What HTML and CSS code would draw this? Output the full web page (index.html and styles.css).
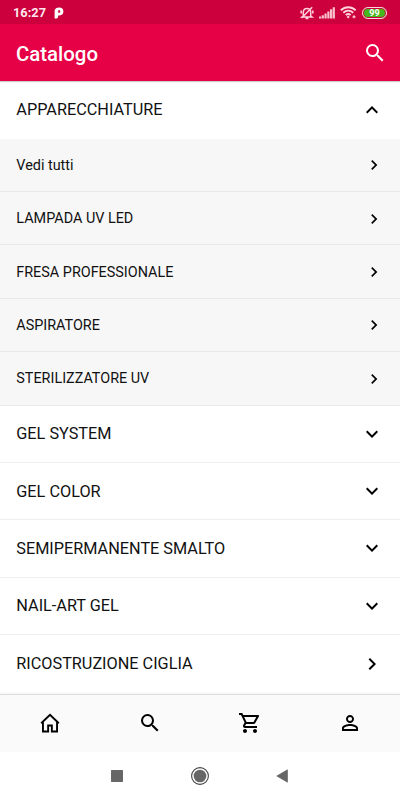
FILE: index.html
```html
<!DOCTYPE html>
<html lang="it">
<head>
    <meta charset="UTF-8">
    <meta name="viewport" content="width=device-width, initial-scale=1">
    <title>Catalogo</title>
    <link rel="stylesheet" href="styles.css">
</head>
<body>
    <svg class="sprite">
        <symbol id="search" viewBox="0 0 24 24"><path d="M15.5 14h-.79l-.28-.27A6.47 6.47 0 0 0 16 9.5 6.5 6.5 0 1 0 9.5 16c1.61 0 3.09-.59 4.23-1.57l.27.28v.79l5 4.99L20.49 19l-4.99-5zm-6 0C7.01 14 5 11.99 5 9.5S7.01 5 9.5 5 14 7.01 14 9.5 11.99 14 9.5 14z"/></symbol>
        <symbol id="up" viewBox="0 0 24 24"><path d="M12 8l-6 6 1.41 1.41L12 10.83l4.59 4.58L18 14z"/></symbol>
        <symbol id="down" viewBox="0 0 24 24"><path d="M16.59 8.59L12 13.17 7.41 8.59 6 10l6 6 6-6z"/></symbol>
        <symbol id="right" viewBox="0 0 24 24"><path d="M10 6L8.59 7.41 13.17 12l-4.58 4.59L10 18l6-6z"/></symbol>
    </svg>

    <div class="status">
        <span class="time">16:27</span>
        <svg class="app-logo" width="10" height="12" viewBox="0 0 10 12"><path fill-rule="evenodd" d="M.6 3.3C1.4 1.2 3 .5 5.2.5 7.8.5 9.4 2 9.4 4.4 9.4 7 7.6 8.5 5 8.5c-.4 0-.7 0-.9-.1v1.400c0 1-.7 1.700-1.700 1.700H.6V5.200zM4.200 3.300v2.500h.9c.8 0 1.200-.5 1.200-1.300S5.800 3.300 5 3.300z"/></svg>
        <div class="status-icons">
            <svg width="14" height="14" viewBox="0 0 14 14" fill="none" stroke="#ffd3dd" stroke-width="1.5"><path d="M3.3 10V6.2C3.3 3.800 4.900 2.400 7 2.400s3.700 1.400 3.700 3.800V10l1.300 1H2zM5.600 12.600h2.800M1.200 4.500v3M12.800 4.500v3M1.600 12L12.200 1.200"/></svg>
            <svg width="16" height="12" viewBox="0 0 16 12" fill="#f9bfcd"><path d="M0 9.500h2.200v2H0zM2.700 8.200h2.200v3.300H2.700zM5.500 6.500h2.200v5H5.500zM8.300 4.500h2.200v7H8.300zM11 2.300h2.200v9.200H11zM13.700.3h2.200v11.200h-2.200z"/></svg>
            <svg width="17" height="13" viewBox="0 0 17 13" fill="none" stroke="#ffd3dd" stroke-width="1.900"><path d="M.8 4.300c4.300-4.100 10.600-4.100 14.900 0M3.300 6.700c2.900-2.700 7-2.700 9.900 0M5.800 9.100c1.500-1.300 3.400-1.300 4.900 0"/><path d="M8.200 9.600l1.500 1.500-1.500 1.400-1.500-1.400z" fill="#ffd3dd" stroke="none"/><path d="M14 9.300v3M12.500 10.800h3" stroke-width="1.200"/></svg>
            <span class="battery">99</span>
        </div>
    </div>

    <header class="header">
        <h1>Catalogo</h1>
        <svg class="icon"><use href="#search"/></svg>
    </header>

    <main class="list">
        <div class="row open">APPARECCHIATURE<svg class="icon"><use href="#up"/></svg></div>
        <div class="sub">
            <div class="sub-row">Vedi tutti<svg class="icon"><use href="#right"/></svg></div>
            <div class="sub-row">LAMPADA UV LED<svg class="icon"><use href="#right"/></svg></div>
            <div class="sub-row">FRESA PROFESSIONALE<svg class="icon"><use href="#right"/></svg></div>
            <div class="sub-row">ASPIRATORE<svg class="icon"><use href="#right"/></svg></div>
            <div class="sub-row">STERILIZZATORE UV<svg class="icon"><use href="#right"/></svg></div>
        </div>
        <div class="row">GEL SYSTEM<svg class="icon"><use href="#down"/></svg></div>
        <div class="row">GEL COLOR<svg class="icon"><use href="#down"/></svg></div>
        <div class="row">SEMIPERMANENTE SMALTO<svg class="icon"><use href="#down"/></svg></div>
        <div class="row">NAIL-ART GEL<svg class="icon"><use href="#down"/></svg></div>
        <div class="row">RICOSTRUZIONE CIGLIA<svg class="icon"><use href="#right"/></svg></div>
    </main>

    <nav class="tabs">
        <svg class="icon" viewBox="0 0 24 24" fill="none" stroke="#000" stroke-width="1.9"><path d="M3.2 12.2L12 3.900l8.800 8.300M4.950 11v9.500h5.200v-6h3.700v6h5.200V11"/></svg>
        <svg class="icon"><use href="#search"/></svg>
        <svg class="icon" viewBox="0 0 24 24"><path d="M15.550 13c.75 0 1.410-.41 1.750-1.030l3.580-6.490A.996.996 0 0 0 20.010 4H5.210l-.94-2H1v2h2l3.600 7.590-1.350 2.440C4.520 15.370 5.480 17 7 17h12v-2H7l1.100-2h7.450zM6.160 6h12.150l-2.760 5H8.530L6.160 6zM7 18c-1.100 0-1.990.9-1.990 2S5.900 22 7 22s2-.9 2-2-.9-2-2-2zm10 0c-1.100 0-1.990.9-1.990 2s.89 2 1.990 2 2-.9 2-2-.9-2-2-2z"/></svg>
        <svg class="icon" viewBox="0 0 24 24"><path d="M12 5.900a2.100 2.100 0 1 1 0 4.200 2.100 2.100 0 0 1 0-4.200m0 9c2.970 0 6.100 1.460 6.100 2.100v1.100H5.900V17c0-.64 3.130-2.100 6.100-2.100M12 4C9.790 4 8 5.790 8 8s1.790 4 4 4 4-1.790 4-4-1.790-4-4-4zm0 9c-2.670 0-8 1.340-8 4v3h16v-3c0-2.660-5.330-4-8-4z"/></svg>
    </nav>

    <div class="system">
        <svg width="12" height="12" viewBox="0 0 12 12"><path d="M.4.4h11.200v11.200H.4z" fill="#666" stroke="#505050" stroke-width=".8"/></svg>
        <svg width="18" height="18" viewBox="0 0 18 18"><circle cx="9" cy="9" r="8.4" fill="#fff" stroke="#444" stroke-width="1.1"/><circle cx="9" cy="9" r="6.3" fill="#666"/></svg>
        <svg width="12" height="14" viewBox="0 0 12 14"><path d="M.2 7L11.800.3v13.400z" fill="#666"/></svg>
    </div>
</body>
</html>
```

FILE: styles.css
```css
* { box-sizing: border-box; }
body {
    margin: 0; height: 800px; overflow: hidden;
    display: flex; flex-direction: column;
    background: #fff; color: #000;
    font-family: Roboto, sans-serif;
}
.sprite { display: none; }
.icon { width: 24px; height: 24px; flex: none; }
.status {
    height: 24px; flex: none;
    display: flex; align-items: center;
    padding: 1px 13px 0;
    background: #cb003d; color: #fff;
}
.time { font-size: 12.8px; font-weight: 700; color: #ffe6ec; }
.app-logo { margin-left: 8px; fill: #fff; }
.status-icons { display: flex; align-items: center; margin-left: auto; }
.status-icons svg { margin-right: 5px; }
.battery {
    width: 25px; height: 12px;
    border: 1px solid #ffd3dd; border-radius: 6px;
    background: #45b81c;
    box-shadow: inset 0 0 0 1px #cb003d;
    font-size: 9px; font-weight: 700; line-height: 10px; text-align: center;
}
.header {
    height: 57px; flex: none;
    display: flex; align-items: center; justify-content: space-between;
    padding: 0 12.6px 0 16px;
    background: #e60045; color: #fff;
    box-shadow: 0 1px 1px #0003;
    z-index: 1;
}
.header h1 { margin: 3px 0 0; font-size: 20.4px; font-weight: 500; line-height: 24px; }
.header .icon { fill: #fff; }
.list { flex: none; height: 613px; padding-top: .4px; }
.row, .sub-row {
    display: flex; align-items: center; justify-content: space-between;
    padding: 0 16.4px 0 16.3px;
    color: #111;
}
.row { height: 57.4px; font-size: 16.25px; border-bottom: 1px solid #eee; }
.row.open { border-bottom-color: transparent; }
.row:last-child { border-bottom: 0; }
.sub { background: #f7f7f7; }
.sub-row { height: 53.35px; padding-top: 1px; font-size: 14.4px; border-bottom: 1px solid #e9e9e9; }
.sub-row .icon { width: 20px; height: 20px; }
.tabs {
    height: 58px; flex: none;
    display: grid; grid-template-columns: repeat(4, 1fr);
    place-items: center;
    padding-bottom: 1px;
    background: #fafafa;
    border-top: 1px solid #dcdcdc;
    box-shadow: 0 -1px 2px #0000000d;
}
.system {
    flex: 1;
    display: flex; align-items: center; justify-content: center;
    gap: 67.5px;
    padding-right: 1px;
}
```
